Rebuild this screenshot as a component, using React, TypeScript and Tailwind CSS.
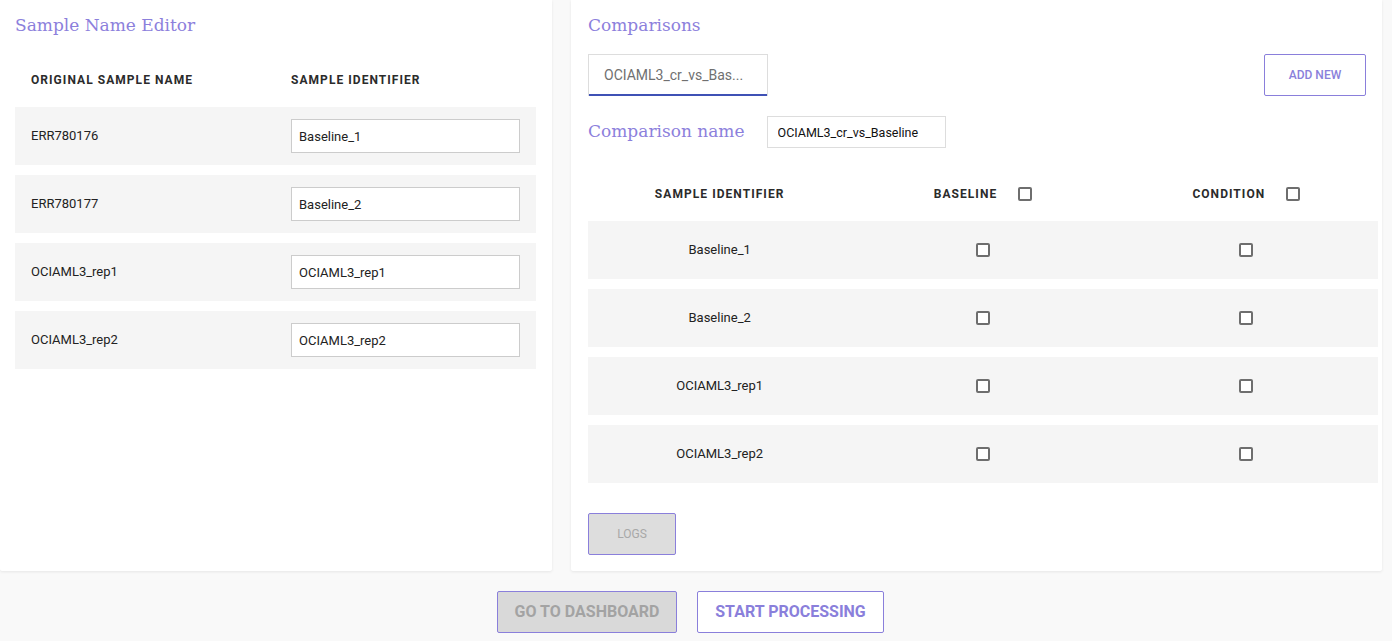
import React, { useState } from 'react'

const samples = [
    { original: 'ERR780176', identifier: 'Baseline_1' },
    { original: 'ERR780177', identifier: 'Baseline_2' },
    { original: 'OCIAML3_rep1', identifier: 'OCIAML3_rep1' },
    { original: 'OCIAML3_rep2', identifier: 'OCIAML3_rep2' },
]

const Box: React.FC = () => (
    <span className="inline-block h-[14px] w-[14px] rounded-[2px] border-2 border-[#6e6e6e] bg-white"></span>
)

const App: React.FC = () => {
    const [names, setNames] = useState(samples.map((s) => s.identifier))
    const [comparison, setComparison] = useState('OCIAML3_cr_vs_Baseline')

    return (
        <div className="flex min-h-[641px] flex-col bg-[#f9f9f9] font-['Roboto',sans-serif] text-[#222]">
            <div className="flex gap-[19px] pr-[10px]">
                {/* Sample name editor */}
                <div className="flex h-[571px] w-[552px] flex-col rounded-b-[2px] bg-white px-[15px] shadow-[0_1px_3px_rgba(0,0,0,0.08)]">
                    <h2 className="mt-[13px] font-['DejaVu_Serif',serif] text-[17px] leading-[24px] text-[#8c80dc]">
                        Sample Name Editor
                    </h2>
                    <div className="mt-[34px] flex h-[36px] text-[12px] font-bold uppercase tracking-[1.05px] text-[#2b2b2b]">
                        <span className="w-[276px] pl-[16px]">Original Sample Name</span>
                        <span>Sample Identifier</span>
                    </div>
                    <div className="flex flex-col gap-[10px] pr-px">
                        {samples.map((s, i) => (
                            <div key={i} className="flex h-[58px] items-center bg-[#f5f5f5] text-[13px]">
                                <span className="w-[276px] pl-[16px]">{s.original}</span>
                                <input
                                    value={names[i]}
                                    onChange={(e) => {
                                        const next = [...names]
                                        next[i] = e.target.value
                                        setNames(next)
                                    }}
                                    className="h-[34px] w-[229px] border border-[#cccccc] bg-white px-[7px] text-[13px] text-[#222] outline-none"
                                />
                            </div>
                        ))}
                    </div>
                </div>

                {/* Comparisons */}
                <div className="flex h-[571px] flex-1 flex-col rounded-b-[2px] bg-white pl-[17px] pr-[4px] shadow-[0_1px_3px_rgba(0,0,0,0.08)]">
                    <h2 className="mt-[13px] font-['DejaVu_Serif',serif] text-[17px] leading-[24px] text-[#8c80dc]">
                        Comparisons
                    </h2>
                    <div className="mt-[17px] flex items-start justify-between pr-[12px]">
                        <div className="flex h-[42px] w-[180px] items-center border border-b-0 border-[#dddddd] px-[15px] shadow-[inset_0_-2px_0_#3f51b5] text-[14px] text-[#707070]">
                            OCIAML3_cr_vs_Bas...
                        </div>
                        <button className="h-[42px] w-[102px] rounded-[2px] border border-[#8a7fdb] bg-white text-[12px] font-medium text-[#8a7fdb]">
                            ADD NEW
                        </button>
                    </div>
                    <div className="mt-[20px] flex items-center gap-[22px]">
                        <span className="font-['DejaVu_Serif',serif] text-[17px] text-[#8c80dc]">
                            Comparison name
                        </span>
                        <input
                            value={comparison}
                            onChange={(e) => setComparison(e.target.value)}
                            className="h-[32px] w-[179px] border border-[#dddddd] px-[10px] text-[12.5px] text-[#111] outline-none"
                        />
                    </div>
                    <div className="mt-[31px] grid h-[30px] grid-cols-3 items-center text-[12px] font-bold uppercase tracking-[1.05px] text-[#2b2b2b]">
                        <span className="text-center">Sample Identifier</span>
                        <span className="flex items-center justify-center gap-[21px]">
                            Baseline <Box />
                        </span>
                        <span className="flex items-center justify-center gap-[21px]">
                            Condition <Box />
                        </span>
                    </div>
                    <div className="mt-[12px] flex flex-col gap-[10px]">
                        {names.map((n, i) => (
                            <div key={i} className="grid h-[58px] grid-cols-3 items-center bg-[#f5f5f5] text-[13px]">
                                <span className="text-center">{n}</span>
                                <span className="flex justify-center">
                                    <Box />
                                </span>
                                <span className="flex justify-center">
                                    <Box />
                                </span>
                            </div>
                        ))}
                    </div>
                    <button className="mt-[30px] h-[42px] w-[88px] rounded-[2px] border border-[#8a7fdb] bg-[#dddddd] text-[12px] text-[#a8a8a8]">
                        LOGS
                    </button>
                </div>
            </div>

            {/* Actions */}
            <div className="mt-[20px] flex justify-center gap-[20px] pr-[11px]">
                <button className="h-[42px] w-[180px] rounded-[2px] border border-[#8a7fdb] bg-[#d9d9d9] text-[16px] font-bold text-[#a3a3a3]">
                    GO TO DASHBOARD
                </button>
                <button className="h-[42px] w-[187px] rounded-[2px] border border-[#8a7fdb] bg-white text-[16px] font-bold text-[#8a7fdb]">
                    START PROCESSING
                </button>
            </div>
        </div>
    )
}

export default App
